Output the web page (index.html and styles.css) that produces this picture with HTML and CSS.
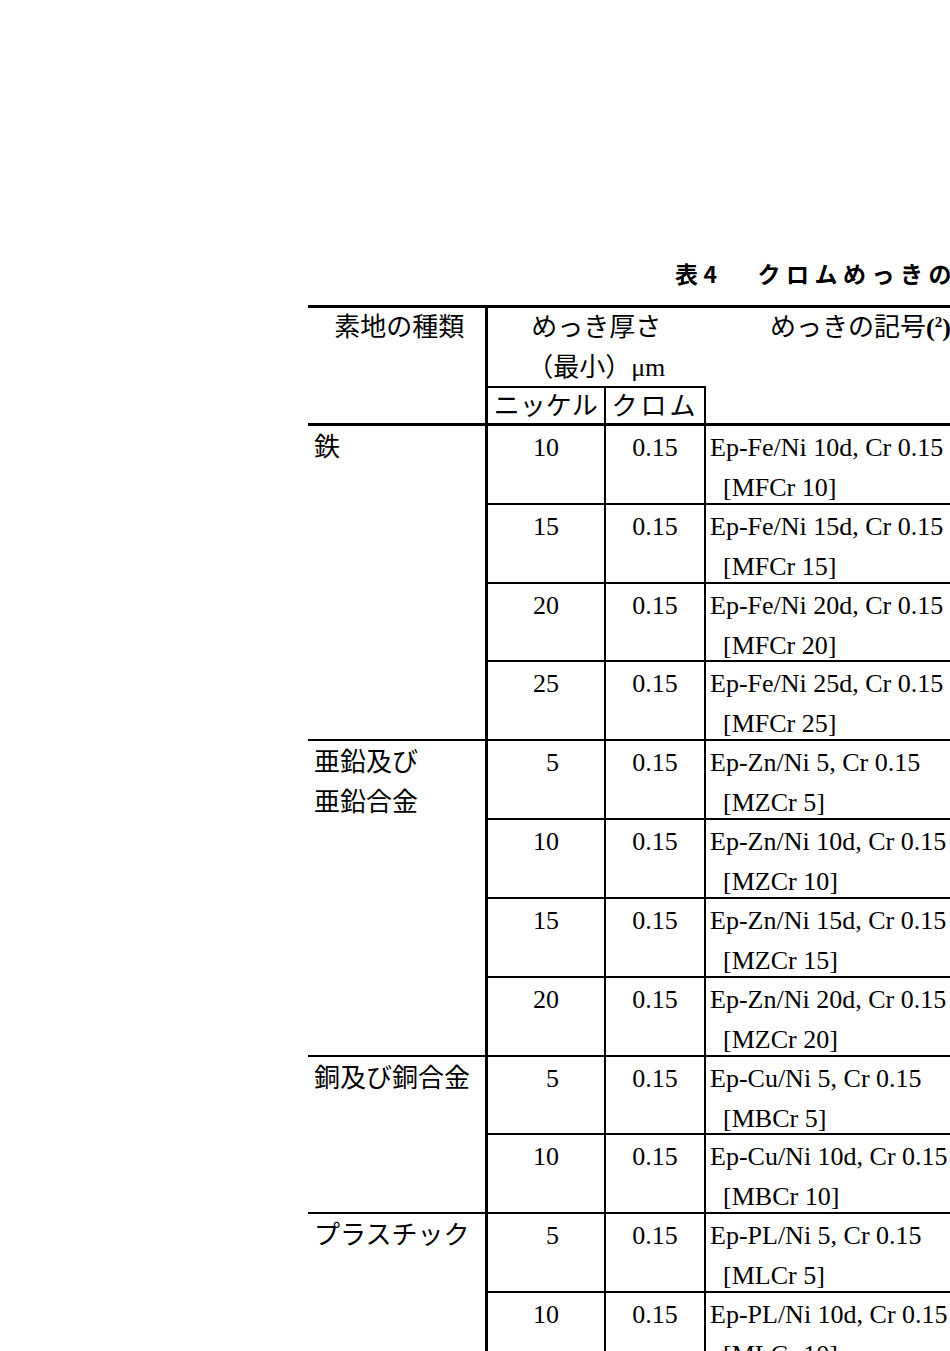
FILE: index.html
```html
<!DOCTYPE html>
<html lang="ja">
<head>
<meta charset="utf-8">
<title>表4 クロムめっきの記号</title>
<link rel="stylesheet" href="styles.css">
</head>
<body>
<div class="page">
  <h1 class="title"><span class="t-no">表4</span><span class="t-name">クロムめっきの記号</span></h1>
  <table class="spec">
    <colgroup><col class="w1"><col class="w2"><col class="w3"><col class="w4"></colgroup>
    <thead>
      <tr class="ha">
        <th class="c1" rowspan="2"><div class="in">素地の種類</div></th>
        <th class="c23" colspan="2"><div class="in">めっき厚さ<br>（最小）μm</div></th>
        <th class="c4" rowspan="2"><div class="in">めっきの記号<b>(<sup>2</sup>)</b></div></th>
      </tr>
      <tr class="hb">
        <th class="c2"><div class="in">ニッケル</div></th>
        <th class="c3"><div class="in spaced">クロム</div></th>
      </tr>
    </thead>
    <tbody>
      <tr>
        <td class="c1" rowspan="4"><div class="in">鉄</div></td>
        <td class="c2"><div class="in">10</div></td>
        <td class="c3"><div class="in">0.15</div></td>
        <td class="c4"><div class="in">Ep-Fe/Ni 10d, Cr 0.15<span class="code">[MFCr 10]</span></div></td>
      </tr>
      <tr>
        <td class="c2"><div class="in">15</div></td>
        <td class="c3"><div class="in">0.15</div></td>
        <td class="c4"><div class="in">Ep-Fe/Ni 15d, Cr 0.15<span class="code">[MFCr 15]</span></div></td>
      </tr>
      <tr>
        <td class="c2"><div class="in">20</div></td>
        <td class="c3"><div class="in">0.15</div></td>
        <td class="c4"><div class="in">Ep-Fe/Ni 20d, Cr 0.15<span class="code">[MFCr 20]</span></div></td>
      </tr>
      <tr>
        <td class="c2"><div class="in">25</div></td>
        <td class="c3"><div class="in">0.15</div></td>
        <td class="c4"><div class="in">Ep-Fe/Ni 25d, Cr 0.15<span class="code">[MFCr 25]</span></div></td>
      </tr>
    </tbody>
    <tbody>
      <tr>
        <td class="c1" rowspan="4"><div class="in">亜鉛及び<br>亜鉛合金</div></td>
        <td class="c2"><div class="in">5</div></td>
        <td class="c3"><div class="in">0.15</div></td>
        <td class="c4"><div class="in">Ep-Zn/Ni 5, Cr 0.15<span class="code">[MZCr 5]</span></div></td>
      </tr>
      <tr>
        <td class="c2"><div class="in">10</div></td>
        <td class="c3"><div class="in">0.15</div></td>
        <td class="c4"><div class="in">Ep-Zn/Ni 10d, Cr 0.15<span class="code">[MZCr 10]</span></div></td>
      </tr>
      <tr>
        <td class="c2"><div class="in">15</div></td>
        <td class="c3"><div class="in">0.15</div></td>
        <td class="c4"><div class="in">Ep-Zn/Ni 15d, Cr 0.15<span class="code">[MZCr 15]</span></div></td>
      </tr>
      <tr>
        <td class="c2"><div class="in">20</div></td>
        <td class="c3"><div class="in">0.15</div></td>
        <td class="c4"><div class="in">Ep-Zn/Ni 20d, Cr 0.15<span class="code">[MZCr 20]</span></div></td>
      </tr>
    </tbody>
    <tbody>
      <tr>
        <td class="c1" rowspan="2"><div class="in">銅及び銅合金</div></td>
        <td class="c2"><div class="in">5</div></td>
        <td class="c3"><div class="in">0.15</div></td>
        <td class="c4"><div class="in">Ep-Cu/Ni 5, Cr 0.15<span class="code">[MBCr 5]</span></div></td>
      </tr>
      <tr>
        <td class="c2"><div class="in">10</div></td>
        <td class="c3"><div class="in">0.15</div></td>
        <td class="c4"><div class="in">Ep-Cu/Ni 10d, Cr 0.15<span class="code">[MBCr 10]</span></div></td>
      </tr>
    </tbody>
    <tbody>
      <tr>
        <td class="c1" rowspan="2"><div class="in">プラスチック</div></td>
        <td class="c2"><div class="in">5</div></td>
        <td class="c3"><div class="in">0.15</div></td>
        <td class="c4"><div class="in">Ep-PL/Ni 5, Cr 0.15<span class="code">[MLCr 5]</span></div></td>
      </tr>
      <tr>
        <td class="c2"><div class="in">10</div></td>
        <td class="c3"><div class="in">0.15</div></td>
        <td class="c4"><div class="in">Ep-PL/Ni 10d, Cr 0.15<span class="code">[MLCr 10]</span></div></td>
      </tr>
    </tbody>
  </table>
</div>
</body>
</html>
```

FILE: styles.css
```css
html, body {
  margin: 0;
  padding: 0;
  overflow: hidden;
  background: #fff;
}

body {
  color: #000;
  font-family: "Liberation Serif", "Noto Sans CJK JP", serif;
  font-size: 26px;
}

.page {
  padding: 258px 0 0 308px;
  width: 707px;
}

.title {
  margin: 0 0 17px 367px;
  font-family: "Noto Sans CJK JP", sans-serif;
  font-weight: 700;
  font-size: 23px;
  line-height: 30px;
  letter-spacing: 5.5px;
  white-space: nowrap;
}

.t-name {
  margin-left: 35px;
}

.spec {
  border-collapse: collapse;
  table-layout: fixed;
  width: 707px;
  border-top: 3px solid #000;
}

.w1 { width: 178px; }
.w2 { width: 119px; }
.w3 { width: 100px; }
.w4 { width: 310px; }

.spec th,
.spec td {
  padding: 0;
  vertical-align: top;
  font-weight: 400;
  white-space: nowrap;
}

.spec .in {
  line-height: 40px;
  margin: 2px 0 -5.2px;
}

.spec thead .in {
  margin: 0 0 -2px;
}

.spec .hb .in {
  margin: -1px 0 -4px;
}

.spec thead tr.hb th {
  border-bottom: 3px solid #000;
}

.spec thead tr.ha .c1,
.spec thead tr.ha .c4 {
  border-bottom: 3px solid #000;
}

.spec thead .c23 {
  border-bottom: 2px solid #000;
  text-align: center;
}

.spec thead .c1 { text-align: center; }
.spec thead .c2 { text-align: center; }
.spec thead .c3 { text-align: center; }
.spec thead .c4 { text-align: center; }

.spaced {
  letter-spacing: 3px;
}

.spec b {
  font-weight: 700;
}

.spec sup {
  font-size: 15px;
  line-height: 0;
  vertical-align: 9px;
}

.spec .c1 {
  border-right: 3px solid #000;
  padding-left: 6px;
}

.spec .c2 {
  border-right: 2px solid #000;
}

.spec .c3 {
  border-right: 2px solid #000;
}

.spec tbody td.c2 {
  text-align: right;
  padding-right: 45px;
}

.spec tbody td.c3 {
  text-align: center;
}

.spec tbody td.c4 {
  padding-left: 4px;
}

.spec tbody td {
  border-bottom: 2px solid #000;
}

.spec tbody {
  border-top: 2px solid #000;
}

.code {
  display: block;
  padding-left: 13px;
}
```
